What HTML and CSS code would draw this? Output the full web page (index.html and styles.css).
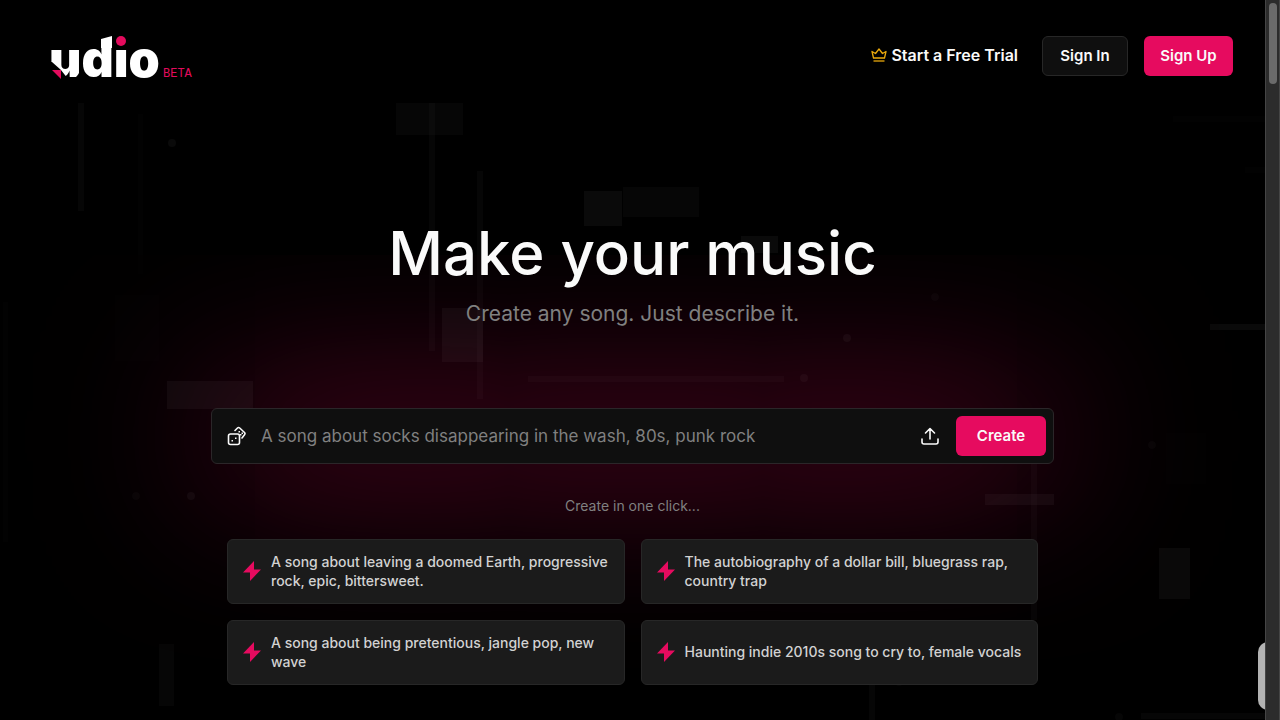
FILE: index.html
```
<!DOCTYPE html>
<html lang="en">
<head>
<meta charset="utf-8">
<meta name="viewport" content="width=device-width, initial-scale=1">
<title>Udio | Make your music</title>
<link rel="stylesheet" href="styles.css">
</head>
<body>
<div class="page">
  <svg class="backdrop" aria-hidden="true">
    <g class="faint">
      <rect x="138" y="114" width="5" height="160"/><rect x="115" y="295" width="44" height="66"/>
      <rect x="3" y="302" width="5" height="240"/><rect x="1173" y="116" width="92" height="6"/>
      <rect x="1245" y="167" width="20" height="6"/><rect x="1166" y="433" width="40" height="51"/>
    </g>
    <g class="soft">
      <rect x="78" y="103" width="6" height="108"/><rect x="396" y="103" width="67" height="32"/>
      <rect x="429" y="103" width="6" height="248"/><rect x="477" y="171" width="6" height="228"/>
      <rect x="623" y="187" width="76" height="30"/><rect x="528" y="376" width="256" height="6"/>
      <rect x="1031" y="464" width="6" height="156"/><rect x="869" y="684" width="6" height="36"/>
      <rect x="159" y="644" width="15" height="62"/><rect x="1141" y="713" width="124" height="6"/>
      <circle cx="935" cy="297" r="4"/><circle cx="1152" cy="445" r="4"/>
      <circle cx="1119" cy="717" r="4"/><circle cx="899" cy="682" r="4"/>
      <circle cx="136" cy="496" r="4"/>
    </g>
    <g class="clear">
      <rect x="584" y="191" width="38" height="35"/><rect x="442" y="308" width="41" height="54"/>
      <rect x="167" y="381" width="86" height="28"/><rect x="741" y="236" width="37" height="17"/>
      <rect x="985" y="494" width="69" height="11"/><rect x="1159" y="548" width="31" height="51"/>
      <rect x="1210" y="324" width="55" height="6"/><circle cx="804" cy="378" r="4"/>
      <circle cx="172" cy="143" r="4"/><circle cx="847" cy="338" r="4"/><circle cx="191" cy="496" r="4"/>
    </g>
  </svg>

  <header class="header">
    <a class="brand" href="#" aria-label="Udio beta">
      <svg class="logo" width="109" height="44" viewBox="0 0 109 44">
        <text class="logo-word" x="-3" y="41">udio</text>
        <path class="logo-cut" d="M62 -4h16v16H62zM-2 26h2l9 8 7 9H-2zM28 32v12H19c5-2 9-6 9-12z"/>
        <path class="logo-tip" d="M49 3l11-3v12H49z"/>
        <circle class="logo-pink" cx="69" cy="5" r="5"/>
        <path class="logo-pink" d="M0 34h9v9z"/>
      </svg>
      <span class="beta">BETA</span>
    </a>
    <nav class="nav">
      <a class="trial" href="#">
        <svg class="crown" width="16" height="16" viewBox="0 0 16 16"><path d="M1 4.500l3.500 2L8 2l3.500 4.500L15 4.500 13.500 11h-11z"/><path d="M2.500 14h11"/></svg>
        Start a Free Trial
      </a>
      <button class="button button-dark" type="button">Sign In</button>
      <button class="button button-pink" type="button">Sign Up</button>
    </nav>
  </header>

  <main class="main">
    <h1 class="title">Make your music</h1>
    <p class="subtitle">Create any song. Just describe it.</p>
    <form class="prompt">
      <button class="icon-button" type="button" aria-label="Random prompt">
        <svg width="20" height="20" viewBox="0 0 20 20"><rect x="1.500" y="8" width="11" height="10.500" rx="2"/><path d="M8 4.500l2.500-2.500q1-1 2.200 0l4.800 4.500q1 1 0 2.200L15 12"/><path class="pip" d="M4.500 14h1.500v1.500H4.500zM8 11.500h1.500V13H8zM11.500 5H13v1.500h-1.500zM14.500 6.500H16V8h-1.500zM13 8h1.500v1.500H13z"/></svg>
      </button>
      <input class="prompt-input" type="text" aria-label="Describe your song" placeholder="A song about socks disappearing in the wash, 80s, punk rock">
      <button class="icon-button" type="button" aria-label="Upload audio">
        <svg width="20" height="20" viewBox="0 0 20 20"><path d="M10 13V2.500M5.500 7L10 2.500 14.500 7M2 13v3q0 2 2 2h12q2 0 2-2V13"/></svg>
      </button>
      <button class="button button-pink create" type="submit">Create</button>
    </form>
    <p class="hint">Create in one click...</p>
    <div class="cards">
      <button class="card" type="button"><svg class="bolt" width="20" height="20" viewBox="0 0 20 20"><path d="M12 0L1 11.500h7L8 20 19 8.500h-7z"/></svg><span>A song about leaving a doomed Earth, progressive rock, epic, bittersweet.</span></button>
      <button class="card" type="button"><svg class="bolt" width="20" height="20" viewBox="0 0 20 20"><path d="M12 0L1 11.500h7L8 20 19 8.500h-7z"/></svg><span>The autobiography of a dollar bill, bluegrass rap, country trap</span></button>
      <button class="card" type="button"><svg class="bolt" width="20" height="20" viewBox="0 0 20 20"><path d="M12 0L1 11.500h7L8 20 19 8.500h-7z"/></svg><span>A song about being pretentious, jangle pop, new wave</span></button>
      <button class="card" type="button"><svg class="bolt" width="20" height="20" viewBox="0 0 20 20"><path d="M12 0L1 11.500h7L8 20 19 8.500h-7z"/></svg><span>Haunting indie 2010s song to cry to, female vocals</span></button>
    </div>
  </main>
  <div class="drawer-handle"></div>
</div>
<div class="scrollbar" aria-hidden="true"><div class="thumb"></div></div>
</body>
</html>
```
FILE: styles.css
```
* { box-sizing: border-box; }
body {
  margin: 0;
  min-height: 100vh;
  display: flex;
  background: #000;
  color: #fafafa;
  font-family: Inter, "Liberation Sans", sans-serif;
}
button, input { font-family: inherit; color: inherit; }
.page { flex: 1; min-width: 0; position: relative; overflow: hidden; }
.backdrop { position: absolute; inset: 0; width: 100%; height: 100%; }
.faint { fill: #020202; }
.soft { fill: #fff; fill-opacity: .025; }
.clear { fill: #fff; fill-opacity: .04; }

.header {
  position: relative;
  display: flex;
  justify-content: space-between;
  align-items: flex-start;
  padding: 36px 32px 0 52px;
}
.brand { display: flex; align-items: flex-end; gap: 2px; color: #e30b5d; text-decoration: none; }
.logo { display: block; overflow: visible; }
.logo-word { font-size: 50px; font-weight: 900; fill: #fff; }
.logo-tip { fill: #fff; }
.logo-cut { fill: #000; }
.logo-pink { fill: #e30b5d; }
.beta { font: 12px/12px "Liberation Mono", monospace; }
.nav { display: flex; align-items: center; }
.trial {
  display: flex;
  align-items: center;
  gap: 4px;
  margin-right: 24px;
  padding-bottom: 2px;
  color: #fafafa;
  font-size: 16px;
  font-weight: 600;
  line-height: 20px;
  text-decoration: none;
}
.crown { fill: none; stroke: #eaa90c; stroke-width: 1.3; stroke-linejoin: round; }
.button {
  height: 40px;
  padding: 0 16px 2px;
  border: 0;
  border-radius: 6px;
  font-size: 15px;
  font-weight: 600;
}
.button-dark { min-width: 86px; margin-right: 16px; background: #0f0f0f; border: 1px solid #272727; }
.button-pink { min-width: 89px; background: #e60b5f; }

.main {
  position: relative;
  display: flex;
  flex-direction: column;
  align-items: center;
  width: 843px;
  max-width: 100%;
  margin: 0 auto;
  padding-top: 137px;
}
.title { margin: 0; font-size: 60px; font-weight: 500; line-height: 72px; }
.subtitle { margin: 11px 0 0; color: #808080; font-size: 21px; line-height: 28px; }
.title, .subtitle, .hint, .cards { position: relative; z-index: 1; }
.prompt {
  display: flex;
  align-items: center;
  width: 100%;
  height: 56px;
  margin: 80px 0 0;
  padding: 0 7px 0 15px;
  background: #0f0f0f;
  border: 1px solid #2b2629;
  border-radius: 6px;
  box-shadow: 0 0 170px rgba(227, 11, 92, .65);
}
.icon-button { width: 20px; height: 20px; padding: 0; border: 0; background: none; }
.icon-button svg { display: block; fill: none; stroke: #fafafa; stroke-width: 1.6; stroke-linecap: round; stroke-linejoin: round; }
.icon-button .pip { fill: #fafafa; stroke: none; }
.prompt-input {
  flex: 1;
  min-width: 0;
  height: 40px;
  padding: 0 14px;
  border: 0;
  outline: 0;
  background: none;
  font-size: 17px;
}
.prompt-input::placeholder { color: #808080; opacity: 1; }
.create { min-width: 90px; margin-left: 16px; }
.hint { margin: 32px 0 0; color: #808080; font-size: 14px; line-height: 19px; }
.cards {
  display: grid;
  grid-template-columns: 1fr 1fr;
  gap: 16px;
  width: 100%;
  padding: 24px 16px 35px;
}
.card {
  display: flex;
  align-items: center;
  gap: 9px;
  min-height: 65px;
  padding: 10px 8px 12px 14px;
  background: #1b1b1b;
  border: 1px solid #272727;
  border-radius: 6px;
  color: #d2d2d2;
  font-size: 14px;
  font-weight: 500;
  line-height: 19px;
  text-align: left;
}
.bolt { flex: none; fill: #e60b5f; }
.drawer-handle {
  position: absolute;
  right: -13px;
  bottom: 10px;
  width: 20px;
  height: 68px;
  background: #b3b3b3;
  border-radius: 10px;
}
.scrollbar { width: 15px; padding: 3px 2px 0 3px; background: #2c2c2c; border-left: 1px solid #454545; border-right: 1px solid #454545; }
.thumb { width: 8px; height: 81px; background: #6b6b6b; border-radius: 4px; }
```
